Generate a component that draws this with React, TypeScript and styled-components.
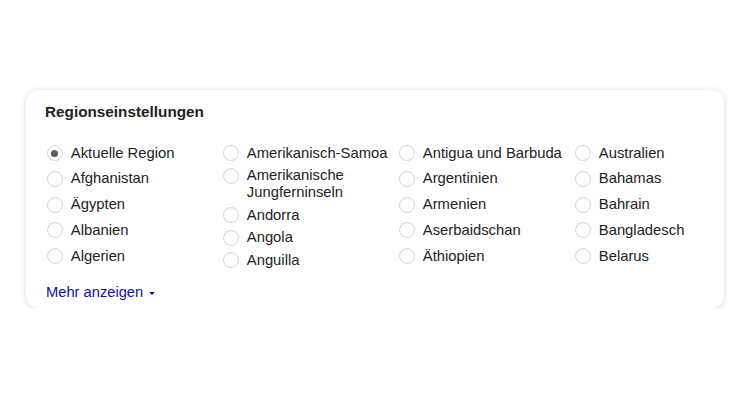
import React from "react";
import styled, { createGlobalStyle } from "styled-components";

const GlobalStyle = createGlobalStyle`
  html, body {
    margin: 0;
    padding: 0;
    background: #ffffff;
  }
  body {
    font-family: "Liberation Sans", Arial, sans-serif;
    color: #222222;
  }
`;

const Page = styled.div`
  padding: 90px 26px 0 26px;
`;

const Card = styled.section`
  box-sizing: border-box;
  width: 698px;
  height: 218px;
  background: #ffffff;
  border-radius: 12px;
  box-shadow: 0 1px 6px rgba(32, 33, 36, 0.16), 0 0 1px rgba(32, 33, 36, 0.08);
  padding: 12px 19px 0 19px;
  display: flex;
  flex-direction: column;
`;

const Title = styled.h2`
  margin: 0;
  font-size: 15.3px;
  line-height: 20px;
  font-weight: 700;
  color: #222222;
`;

const Grid = styled.div`
  margin-top: 22.7px;
  display: grid;
  grid-template-columns: repeat(4, 176px);
  align-items: start;
`;

const Column = styled.div<{ $gap: number }>`
  display: flex;
  flex-direction: column;
  gap: ${(p) => p.$gap}px;
`;

const Option = styled.label`
  display: flex;
  align-items: flex-start;
  font-size: 14.8px;
  line-height: 17px;
  color: #222222;
  cursor: pointer;
  padding-right: 2px;
`;

const Radio = styled.span<{ $checked?: boolean }>`
  box-sizing: border-box;
  flex: 0 0 auto;
  width: 16px;
  height: 16px;
  margin: 0.5px 8.3px 0 1.5px;
  border-radius: 50%;
  border: 1px solid #d6d6d6;
  box-shadow: inset 0 1px 1px rgba(0, 0, 0, 0.04);
  background: #ffffff;
  display: flex;
  align-items: center;
  justify-content: center;
  &::after {
    content: "";
    display: ${(p) => (p.$checked ? "block" : "none")};
    width: 7px;
    height: 7px;
    border-radius: 50%;
    background: #5f5f5f;
  }
`;

const MoreLink = styled.a`
  margin: 15px 0 0 1px;
  display: inline-flex;
  align-items: center;
  align-self: flex-start;
  font-size: 14.7px;
  line-height: 17px;
  color: #1a0dab;
  text-decoration: none;
  cursor: pointer;
`;

const Caret = styled.span`
  display: inline-block;
  margin-left: 6px;
  margin-top: 2px;
  width: 0;
  height: 0;
  border-left: 3.5px solid transparent;
  border-right: 3.5px solid transparent;
  border-top: 3.5px solid #1a0dab;
`;

type Col = { gap: number; items: string[] };

const columns: Col[] = [
  {
    gap: 8.75,
    items: ["Aktuelle Region", "Afghanistan", "Ägypten", "Albanien", "Algerien"],
  },
  {
    gap: 5.5,
    items: [
      "Amerikanisch-Samoa",
      "Amerikanische Jungferninseln",
      "Andorra",
      "Angola",
      "Anguilla",
    ],
  },
  {
    gap: 8.75,
    items: [
      "Antigua und Barbuda",
      "Argentinien",
      "Armenien",
      "Aserbaidschan",
      "Äthiopien",
    ],
  },
  {
    gap: 8.75,
    items: ["Australien", "Bahamas", "Bahrain", "Bangladesch", "Belarus"],
  },
];

export default function App() {
  return (
    <>
      <GlobalStyle />
      <Page>
        <Card>
          <Title>Regionseinstellungen</Title>
          <Grid>
            {columns.map((col, ci) => (
              <Column key={ci} $gap={col.gap}>
                {col.items.map((name) => (
                  <Option key={name}>
                    <Radio $checked={name === "Aktuelle Region"} />
                    <span>{name}</span>
                  </Option>
                ))}
              </Column>
            ))}
          </Grid>
          <MoreLink>
            Mehr anzeigen
            <Caret />
          </MoreLink>
        </Card>
      </Page>
    </>
  );
}
